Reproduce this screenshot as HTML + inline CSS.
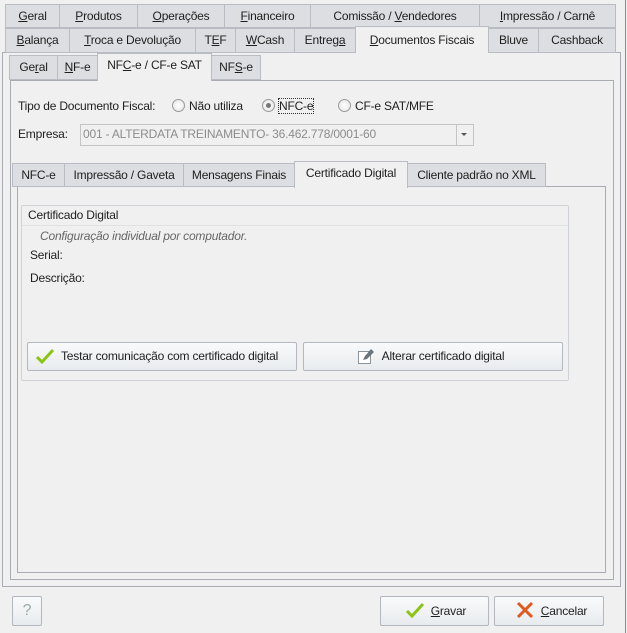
<!DOCTYPE html>
<html><head><meta charset="utf-8"><style>
*{box-sizing:border-box;margin:0;padding:0}
body{width:627px;height:633px;background:#f0f0f0;font-family:"Liberation Sans",sans-serif;font-size:12px;color:#1e1e1e;position:relative;overflow:hidden;letter-spacing:-0.2px}
.a{position:absolute}
.t{position:absolute;background:#dcdee1;border:1px solid #b9bcc2;text-align:center;line-height:22px;white-space:nowrap}
.t.on{background:#f5f5f5;border-bottom:none}
.p{position:absolute;border:1px solid #a9acb2;background:#f0f0f0}
u{text-decoration:underline}
.btn{position:absolute;border:1px solid #b4b8be;border-radius:2px;background:linear-gradient(#f9fafb,#e8ebee);text-align:center;white-space:nowrap}
.rad{display:inline-block;width:13px;height:13px;border:1px solid #9a9a9a;border-radius:50%;background:radial-gradient(#fff,#e2e2e2);vertical-align:-2px;margin-right:4px;position:relative}
</style></head><body>
<div class="a" style="left:625px;top:0;width:1px;height:633px;background:#8a8a8a"></div>
<div class="p" style="left:2px;top:52px;width:619px;height:535px"></div>
<div class="t" style="left:5px;top:4px;width:55px;height:24px"><u>G</u>eral</div>
<div class="t" style="left:59px;top:4px;width:79px;height:24px"><u>P</u>rodutos</div>
<div class="t" style="left:137px;top:4px;width:88px;height:24px"><u>O</u>perações</div>
<div class="t" style="left:224px;top:4px;width:87px;height:24px"><u>F</u>inanceiro</div>
<div class="t" style="left:310px;top:4px;width:170px;height:24px">Comissão / <u>V</u>endedores</div>
<div class="t" style="left:479px;top:4px;width:137px;height:24px"><u>I</u>mpressão / Carnê</div>
<div class="t" style="left:5px;top:28px;width:65px;height:25px"><u>B</u>alança</div>
<div class="t" style="left:69px;top:28px;width:127px;height:25px"><u>T</u>roca e Devolução</div>
<div class="t" style="left:195px;top:28px;width:41px;height:25px">T<u>E</u>F</div>
<div class="t" style="left:235px;top:28px;width:60px;height:25px"><u>W</u>Cash</div>
<div class="t" style="left:294px;top:28px;width:62px;height:25px">Entreg<u>a</u></div>
<div class="t on" style="left:355px;top:26px;width:134px;height:27px;line-height:26px;background:#f0f0f0"><u>D</u>ocumentos Fiscais</div>
<div class="t" style="left:488px;top:28px;width:51px;height:25px">Bluve</div>
<div class="t" style="left:538px;top:28px;width:78px;height:25px">Cashback</div>
<div class="p" style="left:10px;top:80px;width:604px;height:500px"></div>
<div class="t" style="left:9px;top:55px;width:49px;height:25px">Ge<u>r</u>al</div>
<div class="t" style="left:57px;top:55px;width:41px;height:25px"><u>N</u>F-e</div>
<div class="t on" style="left:97px;top:53px;width:115px;height:28px;background:#f0f0f0">NF<u>C</u>-e / CF-e SAT</div>
<div class="t" style="left:211px;top:55px;width:50px;height:25px">NF<u>S</u>-e</div>
<div class="a" style="left:18px;top:99px">Tipo de Documento Fiscal:</div>
<div class="a" style="left:172px;top:99px"><span class="rad"></span>Não utiliza</div>
<div class="a" style="left:262px;top:99px"><span class="rad"><span class="a" style="left:3px;top:3px;width:5px;height:5px;border-radius:50%;background:#777"></span></span><span style="outline:1px dotted #333">NFC-e</span></div>
<div class="a" style="left:338px;top:99px"><span class="rad"></span>CF-e SAT/MFE</div>
<div class="a" style="left:18px;top:127px">Empresa:</div>
<div class="a" style="left:80px;top:124px;width:394px;height:22px;border:1px solid #c4c4c4;background:#f0f0f0;color:#8c8c8c;line-height:19px;padding-left:2px">001 - ALTERDATA TREINAMENTO- 36.462.778/0001-60</div>
<div class="a" style="left:456px;top:125px;width:1px;height:20px;background:#c4c4c4"></div>
<div class="a" style="left:461px;top:133px;border-left:3px solid transparent;border-right:3px solid transparent;border-top:3px solid #555"></div>
<div class="p" style="left:17px;top:186px;width:589px;height:387px"></div>
<div class="t" style="left:12px;top:163px;width:53px;height:24px">NFC-e</div>
<div class="t" style="left:64px;top:163px;width:120px;height:24px">Impressão / Gaveta</div>
<div class="t" style="left:183px;top:163px;width:112px;height:24px">Mensagens Finais</div>
<div class="t on" style="left:294px;top:161px;width:114px;height:27px;background:#f0f0f0">Certificado Digital</div>
<div class="t" style="left:407px;top:163px;width:139px;height:24px">Cliente padrão no XML</div>
<div class="a" style="left:21px;top:205px;width:548px;height:176px;border:1px solid #cfd2d6;border-radius:2px"></div>
<div class="a" style="left:22px;top:225px;width:546px;height:1px;background:#dfe1e4"></div>
<div class="a" style="left:28px;top:208px">Certificado Digital</div>
<div class="a" style="left:40px;top:229px;font-style:italic;color:#666">Configuração individual por computador.</div>
<div class="a" style="left:30px;top:248px">Serial:</div>
<div class="a" style="left:30px;top:271px">Descrição:</div>
<div class="btn" style="left:27px;top:342px;width:270px;height:29px;line-height:27px;text-align:left;padding-left:33px">Testar comunicação com certificado digital</div>
<svg class="a" style="left:35px;top:348px" width="20" height="16"><path d="M2 9 L7 14 L18 2" stroke="#8cc414" stroke-width="3" fill="none"/></svg>
<div class="btn" style="left:303px;top:342px;width:260px;height:29px;line-height:27px;padding-left:20px">Alterar certificado digital</div>
<svg class="a" style="left:357px;top:347px" width="18" height="18"><rect x="1.5" y="4.5" width="12" height="12" fill="#fff" stroke="#8b929a"/><path d="M6 13 L8 9 L14 2 L17 5 L10 12 Z" fill="#6b737c"/></svg>
<div class="btn" style="left:12px;top:596px;width:30px;height:30px;line-height:28px;color:#9aa;font-size:16px">?</div>
<div class="btn" style="left:380px;top:596px;width:109px;height:30px;line-height:28px;padding-left:28px"><u>G</u>ravar</div>
<svg class="a" style="left:405px;top:602px" width="20" height="16"><path d="M2 9 L7 14 L18 2" stroke="#8cc414" stroke-width="3" fill="none"/></svg>
<div class="btn" style="left:494px;top:596px;width:110px;height:30px;line-height:28px;padding-left:30px"><u>C</u>ancelar</div>
<svg class="a" style="left:516px;top:601px" width="18" height="18"><path d="M2 2 L16 16 M16 2 L2 16" stroke="#e05a1e" stroke-width="3"/></svg>
</body></html>
